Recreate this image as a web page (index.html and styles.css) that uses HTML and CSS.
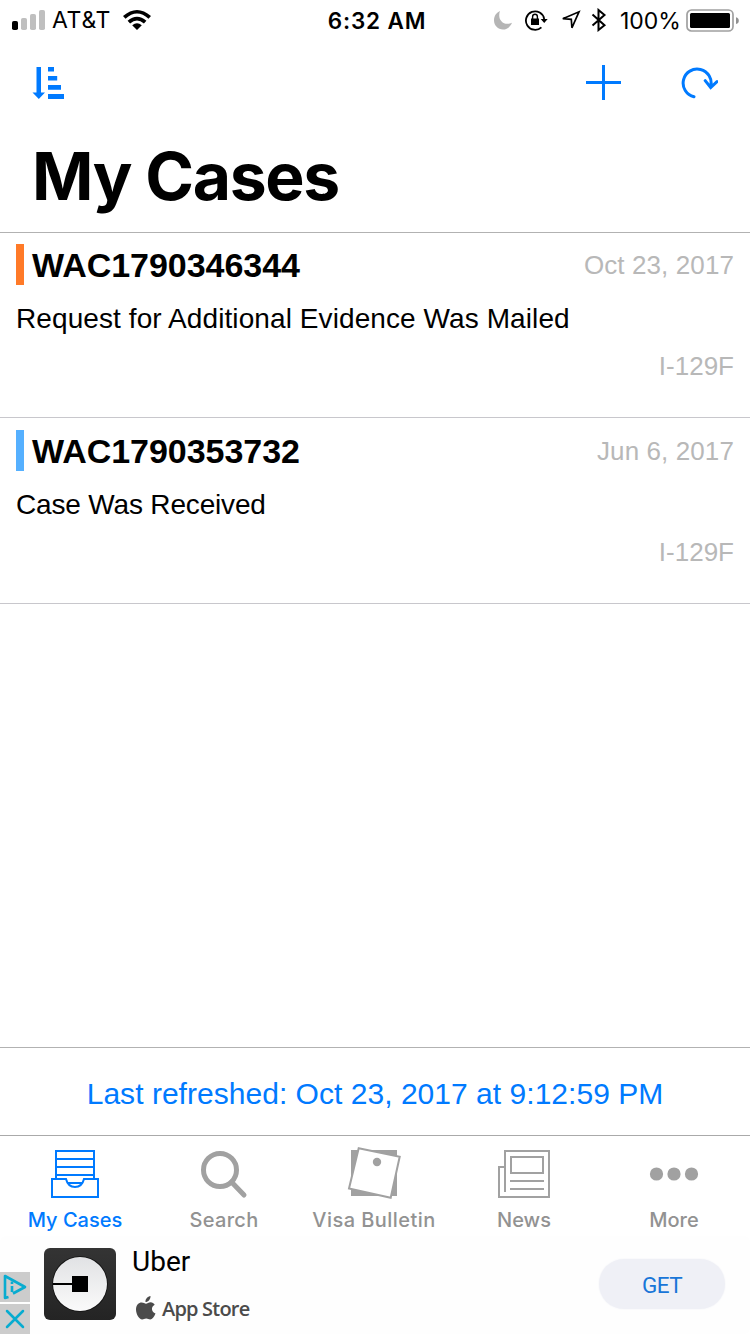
FILE: index.html
```html
<!DOCTYPE html>
<html lang="en">
<head>
<meta charset="utf-8">
<title>My Cases</title>
<link rel="stylesheet" href="styles.css">
</head>
<body>
<div class="screen">
  <header class="status">
    <div class="status-left">
      <svg width="34" height="22" viewBox="0 0 34 22"><rect x="0" y="12" width="6" height="9" rx="1.8"/><g fill="#bfbfbf"><rect x="9" y="9" width="6" height="12" rx="1.8"/><rect x="18" y="5" width="6" height="16" rx="1.8"/><rect x="27" y="1" width="6" height="20" rx="1.8"/></g></svg>
      <span class="carrier">AT&amp;T</span>
      <svg class="wifi" width="28" height="20" viewBox="0 0 28 20"><path d="M0 6Q14 -6 28 6L25.500 8.700Q14 -1.700 2.500 8.700ZM4.600 10.700Q14 2.800 23.400 10.700L20.900 13.400Q14 7.700 7.100 13.400ZM9.200 15.200Q14 11.500 18.800 15.200L14 20Z"/></svg>
    </div>
    <span class="clock">6:32 AM</span>
    <div class="status-right">
      <svg width="19" height="20" viewBox="0 0 19 20"><path fill="#b5b5b5" d="M6 1C3 9 9 16.500 18 12.800C16 17.500 12.500 19.500 9 19.500C4 19.500 0 15.500 0 10.300C0 6 2.500 2.500 6 1Z"/></svg>
      <svg class="lock" width="23" height="22" viewBox="0 0 23 22"><path d="M16.400 18.300A9.200 9.200 0 1 1 19.200 10" fill="none" stroke="#000" stroke-width="1.800"/><path d="M15.700 10H22.700L19.200 14ZM6 9.500H14V16H6Z"/><path d="M7.600 10V7.700Q7.600 5.300 10 5.300T12.400 7.700V10" fill="none" stroke="#000" stroke-width="1.400"/></svg>
      <svg class="loc" width="20" height="20" viewBox="0 0 20 20"><path d="M1.800 8.700L18 1.800L10.900 17.800L10.300 9.300Z" fill="none" stroke="#000" stroke-width="1.700"/></svg>
      <svg class="bt" width="16" height="24" viewBox="0 0 16 24"><path d="M1.500 6.500L13.500 17.200L7.500 22V2L13.500 7L1.500 17.500" fill="none" stroke="#000" stroke-width="2"/></svg>
      <span class="percent">100%</span>
      <svg class="battery" width="53" height="24" viewBox="0 0 53 24"><rect x="1" y="1" width="46" height="21" rx="4.500" fill="none" stroke="#a0a0a0" stroke-width="1.700"/><rect x="4" y="4" width="40" height="15" rx="1.500"/><path d="M50 8.300Q52.800 9 52.800 11.700T50 15Z" fill="#909090"/></svg>
    </div>
  </header>

  <nav class="toolbar">
    <svg width="33" height="34" viewBox="0 0 33 34" fill="#007aff"><path d="M4.500 1H9V26.500H13L6.800 33L.5 26.500H4.500ZM16 1H22V5.500H16ZM16 10H25.200V14.500H16ZM16 19H29V23.800H16ZM16 28H32V33H16Z"/></svg>
    <div class="actions">
      <svg class="plus" width="35" height="35" viewBox="0 0 35 35" stroke="#007aff" stroke-width="3"><path d="M0 17.500H35M17.500 0V35"/></svg>
      <svg width="37" height="34" viewBox="0 0 37 34" fill="none" stroke="#007aff" stroke-width="3" stroke-linecap="round"><path d="M13 30.700A14 14 0 1 1 29.700 20.500M24.200 14.600L29.700 21.500L36 15.700"/></svg>
    </div>
  </nav>

  <h1 class="title">My Cases</h1>

  <main class="list">
    <article class="case evidence">
      <div class="case-head"><h2>WAC1790346344</h2><time>Oct 23, 2017</time></div>
      <p class="state s1">Request for Additional Evidence Was Mailed</p>
      <p class="form">I-129F</p>
    </article>
    <article class="case received">
      <div class="case-head"><h2>WAC1790353732</h2><time>Jun 6, 2017</time></div>
      <p class="state s2">Case Was Received</p>
      <p class="form">I-129F</p>
    </article>
  </main>

  <div class="refreshed"><span>Last refreshed: Oct 23, 2017 at 9:12:59 PM</span></div>

  <nav class="tabs">
    <a class="tab active">
      <svg width="48" height="52" viewBox="0 0 48 52" fill="none" stroke="#007aff" stroke-width="2"><path d="M5 30V3H43V30M5 11H43M5 19H43M5 27H43"/><path d="M1 31H15C16 35 18 39 24 39S32 35 33 31H47V49H1Z" fill="#fff"/><path d="M16 35H32"/></svg>
      <span class="t1">My Cases</span>
    </a>
    <a class="tab">
      <svg width="48" height="52" viewBox="0 0 48 52" fill="none" stroke="#a1a1a1" stroke-width="5" stroke-linecap="round"><circle cx="20" cy="22" r="16.500"/><path d="M31.500 34L44 47"/></svg>
      <span class="t2">Search</span>
    </a>
    <a class="tab">
      <svg width="54" height="52" viewBox="0 0 54 52"><path d="M4 2H50V48H4Z" fill="#a1a1a1"/><path d="M11.700 .3L52.700 8.800L43.700 49.700L2 40.500Z" fill="#fff" stroke="#a1a1a1" stroke-width="2"/><circle cx="30" cy="14" r="4.200" fill="#a1a1a1"/></svg>
      <span class="t3">Visa Bulletin</span>
    </a>
    <a class="tab">
      <svg width="52" height="52" viewBox="0 0 52 52" fill="none" stroke="#a1a1a1" stroke-width="2"><path d="M7 44V3H51V49H1V19H7M13 9H45V25H13ZM12 33H46M12 41H46"/></svg>
      <span class="t4">News</span>
    </a>
    <a class="tab">
      <svg width="50" height="52" viewBox="0 0 50 52" fill="#a1a1a1"><circle cx="7.500" cy="26" r="6.600"/><circle cx="25" cy="26" r="6.600"/><circle cx="42.500" cy="26" r="6.600"/></svg>
      <span class="t5">More</span>
    </a>
  </nav>

  <aside class="ad">
    <div class="ad-controls">
      <svg width="30" height="30" viewBox="0 0 30 30" fill="none" stroke="#08acd0" stroke-width="2.600" stroke-linejoin="round"><path d="M8.500 25L5 26V4L25 15L13 21.500M12 14V20"/><path d="M12 9.500V12"/></svg>
      <svg width="30" height="30" viewBox="0 0 30 30" stroke="#08acd0" stroke-width="2.500" stroke-linecap="round"><path d="M7 7L23 23M23 7L7 23"/></svg>
    </div>
    <svg class="uber" width="72" height="72" viewBox="0 0 72 72">
      <defs><linearGradient id="disc" x2="0" y2="1"><stop stop-color="#e1e2e4"/><stop offset="1" stop-color="#fafafa"/></linearGradient><linearGradient id="tile" x2="0" y2="1"><stop stop-color="#343434"/><stop offset="1" stop-color="#242424"/></linearGradient></defs>
      <rect width="72" height="72" rx="6" fill="url(#tile)"/><circle cx="36" cy="36" r="27.800" fill="#111"/><circle cx="36" cy="36" r="27" fill="url(#disc)"/><path d="M9 35H28V28H44V44H28V37H9Z" fill="#000"/>
    </svg>
    <div class="ad-copy">
      <span class="advertiser">Uber</span>
      <div class="store"><svg width="20" height="24" viewBox="0 0 20 24" fill="#4b4b4b"><path d="M14.500 0C14.700 3.300 12.300 6 9.500 6C9.200 3 11.700 .5 14.500 0ZM18.700 8.800C14.700 11 15.200 16 19.500 17.500C18 21 16.300 23.500 14.200 23.500C12.600 23.500 12 22.500 10.200 22.500S7.600 23.500 6.200 23.500C3.200 23.500 0 18 0 13.500C0 9 2.800 6.500 5.600 6.500C7.500 6.500 8.800 7.700 10 7.700S12.600 6.300 14.700 6.300C16.300 6.400 17.800 7.200 18.700 8.800Z"/></svg><span>App Store</span></div>
    </div>
    <button class="get">GET</button>
  </aside>
</div>
</body>
</html>
```

FILE: styles.css
```css
* { box-sizing: border-box; }
body { margin: 0; background: #fff; color: #000; font-family: "Liberation Sans", Arial, sans-serif; }
h1, h2, p { margin: 0; }
svg { display: block; flex: none; }
span, time, h1, h2, p { white-space: nowrap; }
.screen { width: 750px; height: 1334px; display: flex; flex-direction: column; overflow: hidden; }

.status { height: 40px; display: grid; grid-template-columns: 1fr auto 1fr; align-items: center; padding: 0 11px 0 12px; font-family: Inter, sans-serif; font-size: 23px; }
.status-left, .status-right { display: flex; align-items: center; }
.status-right { justify-content: flex-end; }
.carrier { margin-left: 6px; width: 59px; font-size: 23px; letter-spacing: .7px; }
.wifi { margin-left: 12px; }
.clock { padding-left: 3px; font-weight: 600; letter-spacing: .85px; font-size: 22.500px; }
.lock { margin-left: 12px; }
.loc { margin-left: 13px; }
.bt { margin-left: 10px; }
.percent { margin-left: 13px; padding-top: 1px; width: 61px; }
.battery { margin: 1px 0 0 5px; }

.toolbar { height: 86px; padding: 0 32px; display: flex; align-items: center; justify-content: space-between; }
.actions { display: flex; align-items: center; gap: 60px; }
.plus { margin-bottom: 2px; }
.title { height: 107px; padding-left: 32px; border-bottom: 1px solid #b2b2b2; font: 700 66px/101px Inter, sans-serif; letter-spacing: -1.4px; }

.list { flex: 1; }
.case { height: 185px; padding: 11px 16px 0; border-bottom: 1px solid #c8c7cc; }
.case + .case { height: 186px; padding-top: 12px; }
.case-head { height: 41px; display: flex; align-items: center; justify-content: space-between; border-left: 8px solid #ff7a28; padding: 2px 0 0 8px; }
.received .case-head { border-color: #55b0ff; }
h2 { font-size: 34px; letter-spacing: -.04px; line-height: 39px; }
time, .form { color: #b8b8b8; font-size: 26px; }
time { letter-spacing: .1px; }
.state { margin-top: 18px; font-size: 28px; line-height: 32px; }
.s1 { letter-spacing: .09px; }
.s2 { letter-spacing: -.17px; }
.form { margin-top: 16px; line-height: 30px; text-align: right; }

.refreshed { height: 88px; border-top: 1px solid #b2b2b2; text-align: center; color: #007aff; font-size: 30px; line-height: 91px; letter-spacing: .03px; }

.tabs { height: 101px; border-top: 1px solid #aaa; display: grid; grid-template-columns: repeat(5, 1fr); padding-top: 12px; }
.tab { display: flex; flex-direction: column; align-items: center; color: #929292; font: 500 20px/24px Inter, sans-serif; }
.tab + .tab { padding-right: 2px; }
.tab svg { height: 52px; margin-bottom: 8px; overflow: visible; }
.active { color: #007aff; }
.t2 { letter-spacing: .3px; }
.t3 { letter-spacing: .45px; }

.ad { height: 98px; display: flex; align-items: flex-start; background: #fefefe; font-family: Roboto, sans-serif; border-radius: 6px; }
.ad-controls { align-self: flex-end; display: flex; flex-direction: column; gap: 2px; margin-right: 14px; }
.ad-controls svg { background: #ccc; }
.uber { margin-top: 12px; }
.ad-copy { margin: 9px 0 0 16px; flex: 1; }
.advertiser { display: block; font-size: 28px; line-height: 34px; }
.store { display: flex; align-items: center; gap: 6px; margin: 15px 0 0 4px; color: #4b4b4b; font: 600 20px/28px "Open Sans", sans-serif; letter-spacing: -.8px; }
.store svg { margin-bottom: 2px; }
.store span { padding-top: 1px; }
.get { width: 126px; height: 50px; margin: 23px 25px 0 0; padding: 2px 0 0; border: 0; border-radius: 25px; background: #eff0f6; box-shadow: 0 0 2px #eff0f6; color: #1976d8; font: 400 22.500px Roboto, sans-serif; letter-spacing: -.6px; }
```
